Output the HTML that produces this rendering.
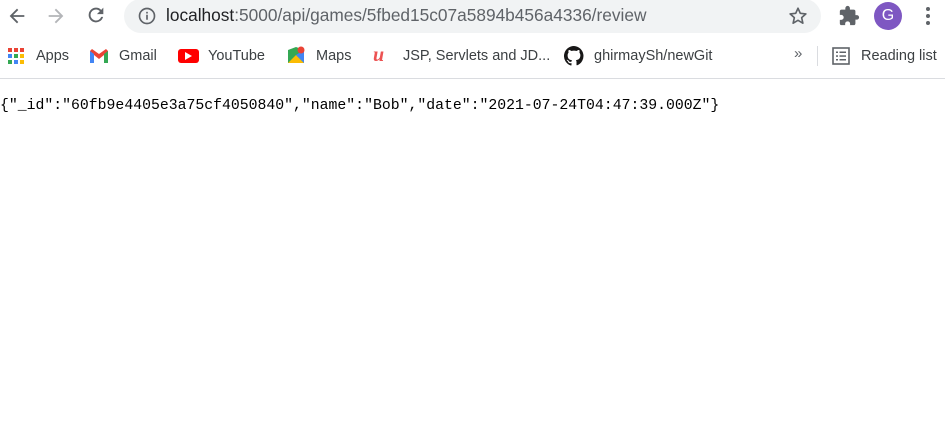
<!DOCTYPE html>
<html><head><meta charset="utf-8"><style>
*{margin:0;padding:0;box-sizing:border-box}
body{width:945px;height:432px;background:#fff;position:relative;overflow:hidden;font-family:"Liberation Sans",Arial,sans-serif}
.a{position:absolute}
.url{left:124px;top:-1px;width:697px;height:34px;background:#f1f3f4;border-radius:17px}
.t{font-size:17.3px;color:#202124;white-space:nowrap}
.bm{font-size:14.5px;color:#3c4043;white-space:nowrap}
.line{left:0;top:78px;width:945px;height:1px;background:#dadce0}
pre{position:absolute;left:0;top:98px;font-family:"Liberation Mono",monospace;font-size:14.8px;color:#000;letter-spacing:0}
</style></head><body>
<svg class="a" style="left:6px;top:5px" width="22" height="22" viewBox="0 0 24 24"><path d="M20 11H7.8l5.6-5.6L12 4l-8 8 8 8 1.4-1.4L7.8 13H20z" fill="#5f6368"/></svg>
<svg class="a" style="left:45px;top:5px" width="22" height="22" viewBox="0 0 24 24"><path d="M4 11h12.2l-5.6-5.6L12 4l8 8-8 8-1.4-1.4 5.6-5.6H4z" fill="#b3b5b8"/></svg>
<svg class="a" style="left:85px;top:4px" width="22" height="22" viewBox="0 0 24 24"><path d="M17.65 6.35A7.96 7.96 0 0 0 12 4a8 8 0 1 0 7.75 10h-2.08A6 6 0 1 1 12 6c1.66 0 3.14.69 4.22 1.78L13 11h7V4z" fill="#5f6368"/></svg>
<div class="a url"></div>
<svg class="a" style="left:137px;top:6px" width="20" height="20" viewBox="0 0 24 24"><circle cx="12" cy="12" r="9" fill="none" stroke="#5f6368" stroke-width="2"/><rect x="11" y="10.5" width="2" height="6" fill="#5f6368"/><rect x="11" y="7" width="2" height="2" fill="#5f6368"/></svg>
<div class="a t" style="left:166px;top:5px">localhost<span style="color:#5f6368">:5000/api/games/5fbed15c07a5894b456a4336/review</span></div>
<svg class="a" style="left:787px;top:5px" width="22" height="22" viewBox="0 0 24 24"><path d="M12 3.5l2.5 5.6 6.1.6-4.6 4.1 1.3 6-5.3-3.1-5.3 3.1 1.3-6-4.6-4.1 6.1-.6z" fill="none" stroke="#5f6368" stroke-width="1.8" stroke-linejoin="round"/></svg>
<svg class="a" style="left:838px;top:5px" width="22" height="22" viewBox="0 0 24 24"><path d="M20.5 11H19V7a2 2 0 0 0-2-2h-4V3.5a2.5 2.5 0 0 0-5 0V5H4a2 2 0 0 0-2 2v3.8h1.5a2.7 2.7 0 0 1 0 5.4H2V20a2 2 0 0 0 2 2h3.8v-1.5a2.7 2.7 0 0 1 5.4 0V22H17a2 2 0 0 0 2-2v-4h1.5a2.5 2.5 0 0 0 0-5z" fill="#5f6368"/></svg>
<div class="a" style="left:874px;top:2px;width:28px;height:28px;border-radius:50%;background:#7e57c2;color:#fff;font-size:16px;text-align:center;line-height:28px">G</div>
<div class="a" style="left:926px;top:7px;width:4px;height:4px;border-radius:50%;background:#5f6368"></div>
<div class="a" style="left:926px;top:14px;width:4px;height:4px;border-radius:50%;background:#5f6368"></div>
<div class="a" style="left:926px;top:21px;width:4px;height:4px;border-radius:50%;background:#5f6368"></div>
<svg class="a" style="left:8px;top:48px" width="16" height="16" viewBox="0 0 16 16">
<rect x="0" y="0" width="4" height="4" fill="#ea4335"/><rect x="6" y="0" width="4" height="4" fill="#ea4335"/><rect x="12" y="0" width="4" height="4" fill="#ea4335"/>
<rect x="0" y="6" width="4" height="4" fill="#4285f4"/><rect x="6" y="6" width="4" height="4" fill="#34a853"/><rect x="12" y="6" width="4" height="4" fill="#fbbc04"/>
<rect x="0" y="12" width="4" height="4" fill="#34a853"/><rect x="6" y="12" width="4" height="4" fill="#4285f4"/><rect x="12" y="12" width="4" height="4" fill="#fbbc04"/></svg>
<div class="a bm" style="left:36px;top:48px">Apps</div>
<svg class="a" style="left:90px;top:49px" width="18" height="14" viewBox="0 0 18 14"><path d="M0 2v12h4V6l5 4 5-4v8h4V2L16 0 9 5 2 0z" fill="#ea4335"/><path d="M0 2v12h4V5z" fill="#4285f4"/><path d="M18 2v12h-4V5z" fill="#34a853"/></svg>
<div class="a bm" style="left:119px;top:48px">Gmail</div>
<div class="a" style="left:178px;top:49px;width:21px;height:14px;border-radius:3px;background:#f00"></div>
<svg class="a" style="left:185px;top:52px" width="7" height="8"><path d="M0 0l7 4-7 4z" fill="#fff"/></svg>
<div class="a bm" style="left:208px;top:48px">YouTube</div>
<svg class="a" style="left:287px;top:46px" width="18" height="18" viewBox="0 0 18 18"><path d="M1 4l8-3 8 3v13H1z" fill="#34a853"/><path d="M1 17l8-8 8 8z" fill="#fbbc04"/><path d="M9 9l8-5v13z" fill="#4285f4"/><circle cx="14" cy="4" r="3.5" fill="#ea4335"/></svg>
<div class="a bm" style="left:316px;top:48px">Maps</div>
<div class="a" style="left:373px;top:44px;color:#ec5252;font-size:20px;font-style:italic;font-weight:bold;font-family:'Liberation Serif',serif">u</div>
<div class="a bm" style="left:403px;top:48px">JSP, Servlets and JD...</div>
<svg class="a" style="left:564px;top:46px" width="20" height="20" viewBox="0 0 16 16"><path d="M8 0a8 8 0 0 0-2.5 15.6c.4 0 .5-.2.5-.4v-1.5c-2.2.5-2.7-1-2.7-1-.4-.9-.9-1.2-.9-1.2-.7-.5.1-.5.1-.5.8.1 1.2.8 1.2.8.7 1.3 1.9.9 2.3.7.1-.5.3-.9.5-1.1-1.8-.2-3.6-.9-3.6-4 0-.9.3-1.6.8-2.1-.1-.2-.4-1 .1-2.1 0 0 .7-.2 2.2.8a7.4 7.4 0 0 1 4 0c1.5-1 2.2-.8 2.2-.8.4 1.1.2 1.9.1 2.1.5.6.8 1.3.8 2.1 0 3.1-1.9 3.7-3.6 3.9.3.3.5.8.5 1.5v2.2c0 .2.1.5.6.4A8 8 0 0 0 8 0z" fill="#181717"/></svg>
<div class="a bm" style="left:594px;top:48px">ghirmaySh/newGit</div>
<div class="a" style="left:794px;top:45px;font-size:15px;color:#5f6368">»</div>
<div class="a" style="left:817px;top:46px;width:1px;height:20px;background:#dadce0"></div>
<svg class="a" style="left:832px;top:47px" width="18" height="18" viewBox="0 0 18 18"><rect x="1" y="1" width="16" height="16" fill="none" stroke="#5f6368" stroke-width="1.6"/><rect x="4" y="4.5" width="2" height="1.5" fill="#5f6368"/><rect x="7.5" y="4.5" width="6.5" height="1.5" fill="#5f6368"/><rect x="4" y="8.3" width="2" height="1.5" fill="#5f6368"/><rect x="7.5" y="8.3" width="6.5" height="1.5" fill="#5f6368"/><rect x="4" y="12" width="2" height="1.5" fill="#5f6368"/><rect x="7.5" y="12" width="6.5" height="1.5" fill="#5f6368"/></svg>
<div class="a bm" style="left:861px;top:48px">Reading list</div>
<div class="a line"></div>
<pre>{"_id":"60fb9e4405e3a75cf4050840","name":"Bob","date":"2021-07-24T04:47:39.000Z"}</pre>
</body></html>
